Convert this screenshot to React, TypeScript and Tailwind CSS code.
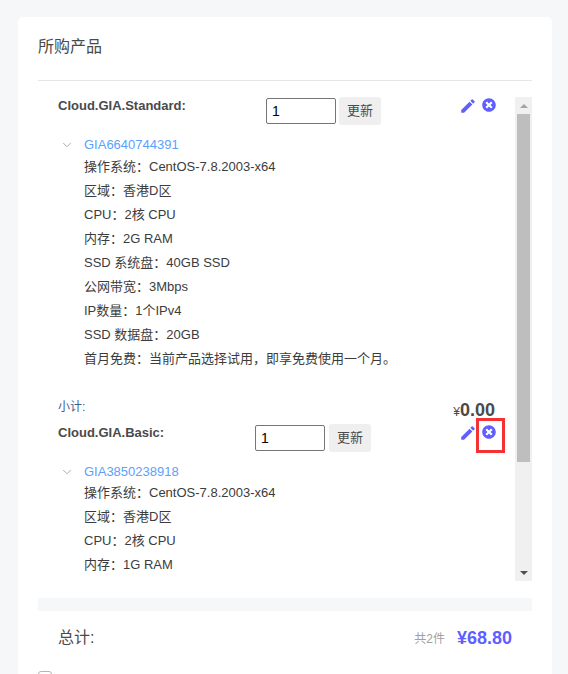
import { ChevronDown } from 'lucide-react';
import { FaTimesCircle } from 'react-icons/fa';
import { MdEdit } from 'react-icons/md';

const FONT = "font-['Liberation_Sans','Noto_Sans_CJK_SC',sans-serif]";

// \uFF1A and \uFF0C are the full-width colon and comma
const standardSpecs = [
    '操作系统\uFF1ACentOS-7.8.2003-x64',
    '区域\uFF1A香港D区',
    'CPU\uFF1A2核 CPU',
    '内存\uFF1A2G RAM',
    'SSD 系统盘\uFF1A40GB SSD',
    '公网带宽\uFF1A3Mbps',
    'IP数量\uFF1A1个IPv4',
    'SSD 数据盘\uFF1A20GB',
    '首月免费\uFF1A当前产品选择试用\uFF0C即享免费使用一个月。',
];

const basicSpecs = ['操作系统\uFF1ACentOS-7.8.2003-x64', '区域\uFF1A香港D区', 'CPU\uFF1A2核 CPU', '内存\uFF1A1G RAM'];

interface ProductProps {
    name: string;
    titleWidth: string;
    buttonGap: string;
    listOffset?: string;
    code: string;
    specs: string[];
    highlightDelete?: boolean;
}

function Product({ name, titleWidth, buttonGap, listOffset = '', code, specs, highlightDelete }: ProductProps) {
    return (
        <div>
            <div className="flex items-start">
                <div className={`${titleWidth} text-[13px] leading-[18px] font-bold text-[#4a4a4a]`}>{name}</div>
                <input
                    readOnly
                    value="1"
                    className="w-[70px] h-[26px] px-[5px] mt-px border border-[#767676] rounded-[2px] text-[14px] text-black bg-white outline-none"
                />
                <button className={`${buttonGap} w-[42px] h-[28px] rounded-[3px] bg-[#efefef] text-[13px] text-[#4a4a4a]`}>更新</button>
                <div className="relative flex items-start ml-auto mr-[19px] gap-[5px] pt-px text-[#5f5fff]">
                    <MdEdit className="w-[18px] h-[18px] -mt-px" />
                    <FaTimesCircle className="w-[14px] h-[14px]" />
                    {highlightDelete && (
                        <div className="absolute top-[-6px] right-[-9px] w-[29px] h-[35px] border-[3px] border-[#f33333]" />
                    )}
                </div>
            </div>
            <div className="flex items-center mt-[9px] h-[21px]">
                <ChevronDown className="w-[14px] h-[14px] ml-[2px] text-[#909090]" strokeWidth={1.25} />
                <span className="ml-[10px] text-[13px] text-[#5b9fff]">{code}</span>
            </div>
            <ul className={`${listOffset} pl-[26px]`}>
                {specs.map((spec) => (
                    <li key={spec} className="h-[24px] text-[13px] leading-[24px] text-[#3c3c3c] whitespace-nowrap">
                        {spec}
                    </li>
                ))}
            </ul>
        </div>
    );
}

export default function App() {
    return (
        <div className={`${FONT} h-[674px] overflow-hidden bg-[#f6f7f9] pt-[17px] px-[18px] pr-[16px]`}>
            <div className="h-[700px] bg-white rounded-[5px] px-[20px]">
                <h2 className="h-[64px] pt-[19px] text-[16px] leading-[22px] font-normal text-[#4a4a4a] border-b border-[#e6e6e6]">所购产品</h2>

                {/* Product list with scrollbar */}
                <div className="flex h-[484px] mt-4 overflow-hidden">
                    <div className="flex-1 pl-[20px] overflow-hidden">
                        <Product
                            name="Cloud.GIA.Standard:"
                            titleWidth="w-[208px]"
                            buttonGap="ml-[3px]"
                            code="GIA6640744391"
                            specs={standardSpecs}
                        />
                        <div className="flex items-end justify-between h-[32px] mt-[21px] pr-[20px]">
                            <span className="text-[12px] leading-[18px] mb-[8px] text-[#3f5f8f]">小计:</span>
                            <span className="font-bold text-[18px] leading-[24px] text-[#4a4a4a]">
                                <span className="text-[12px] font-normal">¥</span>0.00
                            </span>
                        </div>
                        <Product
                            name="Cloud.GIA.Basic:"
                            titleWidth="w-[197px]"
                            buttonGap="ml-[4px]"
                            listOffset="-mt-px"
                            code="GIA3850238918"
                            specs={basicSpecs}
                            highlightDelete
                        />
                    </div>
                    <div className="flex flex-col items-center w-[17px] bg-[#f0f0f0]">
                        <div className="flex items-center justify-center h-[17px] w-full">
                            <div className="w-0 h-0 border-x-[4px] border-x-transparent border-b-[4px] border-b-[#a3a3a3]" />
                        </div>
                        <div className="w-[13px] h-[348px] bg-[#bebebe]" />
                        <div className="flex items-center justify-center h-[17px] w-full mt-auto">
                            <div className="w-0 h-0 border-x-[4px] border-x-transparent border-t-[4px] border-t-[#505050]" />
                        </div>
                    </div>
                </div>

                <div className="h-[13px] mt-[17px] bg-[#f6f7f9]" />

                {/* Total */}
                <div className="flex items-center justify-between h-[54px] pl-[20px] pr-[20px]">
                    <span className="text-[16px] text-[#4a4a4a]">总计:</span>
                    <div className="flex items-center">
                        <span className="text-[12px] text-[#a0a0a0] mt-[2px]">共2件</span>
                        <span className="ml-[12px] text-[18px] font-bold text-[#5f5fff]">¥68.80</span>
                    </div>
                </div>
                <div className="w-[14px] h-[14px] mt-[6px] border border-[#b5b5b5] rounded-[3px] bg-white" />
            </div>
        </div>
    );
}
